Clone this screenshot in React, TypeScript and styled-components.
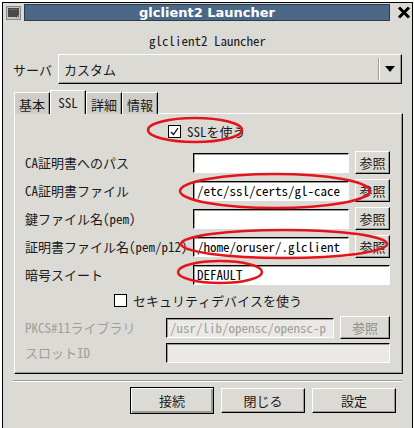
import React from 'react';
import styled, { createGlobalStyle } from 'styled-components';

const GlobalStyle = createGlobalStyle`
  html, body { margin: 0; padding: 0; background: #ffffff; }
  body {
    font-family: "Noto Sans Mono CJK JP", "Noto Sans CJK JP", "DejaVu Sans Mono", monospace;
    font-size: 13px;
    color: #1a1a1a;
  }
  #root { position: relative; width: 414px; height: 428px; overflow: hidden; }
`;

const BG = '#dcdad5';
const SHADOW = '#9d9a94';

const Page = styled.div`
  position: relative;
  width: 414px;
  height: 428px;
  padding: 2px 0 0 2px;
  box-sizing: border-box;
`;

const Window = styled.div`
  width: 411px;
  height: 426px;
  box-sizing: border-box;
  border: 1px solid #000;
  border-bottom: none;
  background: ${BG};
  display: flex;
  flex-direction: column;
`;

const TitleBar = styled.div`
  display: flex;
  align-items: center;
  height: 18px;
  padding: 1px 1px 0 3px;
  box-sizing: border-box;
  gap: 3px;
`;

const TitleText = styled.div`
  flex: 1;
  height: 17px;
  box-sizing: border-box;
  border: 1px solid #2c3a48;
  background: repeating-linear-gradient(0deg, #4d6b89 0px, #4d6b89 1px, #486584 1px, #486584 2px);
  color: #fff;
  font-family: "DejaVu Sans", sans-serif;
  font-weight: bold;
  font-size: 13px;
  line-height: 15px;
  text-align: center;
  margin-right: 4px;
`;

const Header = styled.div`
  height: 33px;
  padding-top: 12px;
  box-sizing: border-box;
  text-align: center;
  line-height: 16px;
`;

const ServerRow = styled.div`
  display: flex;
  align-items: center;
  padding: 0 10px;
  gap: 6px;
`;

const Label = styled.span<{ $disabled?: boolean }>`
  white-space: nowrap;
  color: ${(p) => (p.$disabled ? '#a09e99' : '#1a1a1a')};
`;

const Combo = styled.div`
  flex: 1;
  height: 30px;
  box-sizing: border-box;
  border: 1px solid;
  border-color: #fff #000 #000 #fff;
  box-shadow: inset -1px -1px 0 ${SHADOW};
  display: flex;
  align-items: center;
  padding-left: 5px;
`;

const ComboText = styled.span`
  flex: 1;
`;

const ComboSep = styled.div`
  width: 1px;
  height: 22px;
  background: ${SHADOW};
  border-right: 1px solid #fff;
  margin-right: 5px;
`;

const Arrow = styled.div`
  width: 0;
  height: 0;
  border-left: 5px solid transparent;
  border-right: 5px solid transparent;
  border-top: 6px solid #000;
  margin-right: 6px;
`;

const Notebook = styled.div`
  margin: 6px 9px 0 11px;
  display: flex;
  flex-direction: column;
`;

const TabStrip = styled.div`
  display: flex;
  align-items: flex-end;
  height: 24px;
  margin-bottom: -1px;
  position: relative;
  z-index: 1;
`;

const Tab = styled.div<{ $active?: boolean }>`
  width: 36px;
  box-sizing: border-box;
  height: ${(p) => (p.$active ? 24 : 22)}px;
  border: 1px solid;
  border-bottom: none;
  border-color: #fff #000 transparent #fff;
  box-shadow: inset -1px 0 0 ${SHADOW};
  background: ${(p) => (p.$active ? BG : '#cfcdc8')};
  display: flex;
  align-items: center;
  justify-content: center;
  padding-top: ${(p) => (p.$active ? 0 : 1)}px;
`;

const Panel = styled.div`
  height: 261px;
  box-sizing: border-box;
  border: 1px solid;
  border-color: #fff #000 #000 #fff;
  box-shadow: inset -1px -1px 0 ${SHADOW};
  padding: 10px 12px 0 10px;
  display: flex;
  flex-direction: column;
`;

const CheckRow = styled.label<{ $indent: number }>`
  display: flex;
  align-items: center;
  gap: 6px;
  height: 14px;
  padding-left: ${(p) => p.$indent}px;
`;

const Box = styled.span`
  width: 13px;
  height: 13px;
  box-sizing: border-box;
  border: 1px solid #000;
  background: #fff;
  display: inline-flex;
  align-items: center;
  justify-content: center;
`;

const Grid = styled.div<{ $labelWidth: number }>`
  display: grid;
  grid-template-columns: ${(p) => p.$labelWidth}px 1fr auto;
  grid-auto-rows: 23px;
  column-gap: 6px;
  row-gap: 5px;
  align-items: center;
`;

const Entry = styled.div<{ $disabled?: boolean; $span?: boolean }>`
  height: 20px;
  box-sizing: border-box;
  border: 1px solid;
  border-color: #000 #fff #fff #000;
  box-shadow: inset 1px 1px 0 ${SHADOW};
  background: ${(p) => (p.$disabled ? '#ebe9e5' : '#fff')};
  color: ${(p) => (p.$disabled ? '#a09e99' : '#000')};
  padding: 0 2px 0 3px;
  line-height: 18px;
  white-space: nowrap;
  overflow: hidden;
  ${(p) => (p.$span ? 'grid-column: 2 / 4;' : '')}
`;

const Button = styled.div<{ $disabled?: boolean; $w?: number }>`
  width: ${(p) => p.$w ?? 35}px;
  height: 23px;
  box-sizing: border-box;
  border: 1px solid;
  border-color: #fff #000 #000 #fff;
  box-shadow: inset -1px -1px 0 ${SHADOW};
  display: flex;
  align-items: center;
  justify-content: center;
  color: ${(p) => (p.$disabled ? '#8f8d88' : '#1a1a1a')};
`;

const Separator = styled.div`
  margin: 6px 10px 0 10px;
  height: 1px;
  background: ${SHADOW};
  border-bottom: 1px solid #fff;
`;

const ButtonBar = styled.div`
  display: flex;
  justify-content: flex-end;
  gap: 7px;
  padding: 5px 16px 0 0;
  align-items: center;
`;

const DialogButton = styled.div<{ $default?: boolean }>`
  width: 84px;
  height: ${(p) => (p.$default ? 27 : 25)}px;
  box-sizing: border-box;
  border: 1px solid;
  border-color: ${(p) => (p.$default ? '#000' : '#fff #000 #000 #fff')};
  box-shadow: ${(p) =>
    p.$default ? `inset 1px 1px 0 #fff, inset -2px -2px 0 ${SHADOW}` : `inset -1px -1px 0 ${SHADOW}`};
  display: flex;
  align-items: center;
  justify-content: center;
`;

const Overlay = styled.svg`
  position: absolute;
  left: 0;
  top: 0;
  pointer-events: none;
`;

const WinIcon = () => (
  <svg width="15" height="14" viewBox="0 0 15 14">
    <rect x="0.5" y="0.5" width="14" height="13" fill="#c8c6c1" stroke="#8a8884" />
    <rect x="2" y="2" width="11" height="9" fill="#4a4a4a" />
    <rect x="3" y="3" width="9" height="1" fill="#6a6a6a" />
    <path d="M10 12 L13 9" stroke="#8a8884" />
  </svg>
);

const CloseX = () => (
  <svg width="14" height="13" viewBox="0 0 14 13">
    <path d="M2 1.5 L12 11.5 M12 1.5 L2 11.5" stroke="#000" strokeWidth="3" />
  </svg>
);

const Check = () => (
  <svg width="9" height="9" viewBox="0 0 9 9">
    <path d="M1 5 L3.5 7.5 L8 1" stroke="#000" strokeWidth="1.2" fill="none" />
  </svg>
);

export default function App() {
  return (
    <>
      <GlobalStyle />
      <Page>
        <Window>
          <TitleBar>
            <WinIcon />
            <TitleText>glclient2 Launcher</TitleText>
            <CloseX />
          </TitleBar>
          <Header>glclient2 Launcher</Header>
          <ServerRow>
            <Label>サーバ</Label>
            <Combo>
              <ComboText>カスタム</ComboText>
              <ComboSep />
              <Arrow />
            </Combo>
          </ServerRow>
          <Notebook>
            <TabStrip>
              <Tab>基本</Tab>
              <Tab $active>SSL</Tab>
              <Tab>詳細</Tab>
              <Tab>情報</Tab>
            </TabStrip>
            <Panel>
              <CheckRow $indent={143}>
                <Box>
                  <Check />
                </Box>
                <Label>SSLを使う</Label>
              </CheckRow>
              <Grid $labelWidth={162} style={{ marginTop: 13 }}>
                <Label>CA証明書へのパス</Label>
                <Entry />
                <Button>参照</Button>
                <Label>CA証明書ファイル</Label>
                <Entry>/etc/ssl/certs/gl-cace</Entry>
                <Button>参照</Button>
                <Label>鍵ファイル名(pem)</Label>
                <Entry />
                <Button>参照</Button>
                <Label>証明書ファイル名(pem/p12)</Label>
                <Entry>/home/oruser/.glclient</Entry>
                <Button>参照</Button>
                <Label>暗号スイート</Label>
                <Entry $span>DEFAULT</Entry>
              </Grid>
              <CheckRow $indent={89} style={{ marginTop: 7 }}>
                <Box />
                <Label>セキュリティデバイスを使う</Label>
              </CheckRow>
              <Grid $labelWidth={135} style={{ marginTop: 9, rowGap: 2 }}>
                <Label $disabled>PKCS#11ライブラリ</Label>
                <Entry $disabled>/usr/lib/opensc/opensc-p</Entry>
                <Button $disabled $w={50}>参照</Button>
                <Label $disabled>スロットID</Label>
                <Entry $disabled $span />
              </Grid>
            </Panel>
          </Notebook>
          <Separator />
          <ButtonBar>
            <DialogButton $default>接続</DialogButton>
            <DialogButton>閉じる</DialogButton>
            <DialogButton>設定</DialogButton>
          </ButtonBar>
        </Window>
        <Overlay width="414" height="428" viewBox="0 0 414 428">
          <g fill="none" stroke="#e3141c" strokeWidth="2.5">
            <ellipse cx="195" cy="130" rx="47" ry="12" />
            <ellipse cx="275" cy="191" rx="95" ry="17" />
            <ellipse cx="284" cy="244" rx="103" ry="14" />
            <ellipse cx="220" cy="272" rx="42" ry="11" />
          </g>
        </Overlay>
      </Page>
    </>
  );
}
